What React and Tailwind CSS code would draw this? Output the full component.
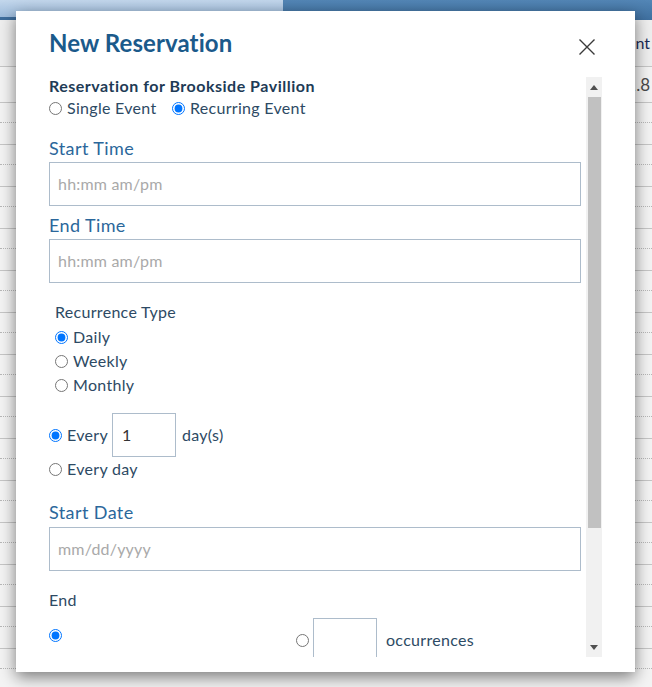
import React from 'react';

function Cells({ children }) {
  return (
    <div className="flex h-full">
      <div className="w-[28px]" />
      <div className="w-[131px] border-l border-[#c9c9c9]" />
      <div className="w-[131px] border-l border-[#c9c9c9]" />
      <div className="w-[131px] border-l border-[#c9c9c9]" />
      <div className="w-[132px] border-l border-[#c9c9c9]" />
      <div className="flex-1 border-l border-[#c9c9c9] flex items-center">
        <div className="w-[96px] shrink-0 text-right whitespace-nowrap">{children}</div>
      </div>
    </div>
  );
}

function Background() {
  const rows = Array.from({ length: 14 });
  return (
    <div className="flex flex-col">
      <div className="h-[20px] flex">
        <div className="w-[283px] bg-gradient-to-b from-[#c3d7ec] to-[#9ebcdc] border-b-[3px] border-[#3e6d9c]" />
        <div className="flex-1 bg-gradient-to-b from-[#5386b6] to-[#3f70a0]" />
      </div>
      <div className="h-[47px] bg-[#efefef] border-b border-[#c6c6c6] text-[16px] text-[#1b2b55]">
        <Cells>Amount</Cells>
      </div>
      <div className="h-[36px] bg-[#f4f4f4] border-b border-[#c6c6c6] text-[17px] text-[#4a4a4a]">
        <Cells>11.8</Cells>
      </div>
      {rows.map((_, i) => (
        <div key={i} className="h-[42px] bg-[#f4f4f4] border-b border-[#c6c6c6] flex flex-col">
          <div className="h-[20px] border-b border-dotted border-[#b8b8b8]" />
          <div className="flex-1" />
        </div>
      ))}
    </div>
  );
}

function Radio({ checked, name }) {
  return (
    <input
      type="radio"
      name={name}
      defaultChecked={checked}
      className="m-0 w-[13px] h-[13px] shrink-0 accent-[#0075ff]"
    />
  );
}

function Field({ placeholder, className = '' }) {
  return (
    <div className={`h-[44px] border border-[#adbccb] flex items-center pl-[8px] text-[16px] tracking-[0.2px] text-[#a9a9a9] ${className}`}>
      {placeholder}
    </div>
  );
}

function Label({ children, className = '' }) {
  return (
    <div className={`h-[22px] flex items-center text-[18px] tracking-[0.4px] text-[#2b679b] ${className}`}>{children}</div>
  );
}

function Option({ name, checked, children, className = '' }) {
  return (
    <label className={`h-[20px] flex items-center gap-[5px] text-[16px] tracking-[0.3px] text-[#2d4a64] ${className}`}>
      <Radio name={name} checked={checked} />
      <span>{children}</span>
    </label>
  );
}

function Scrollbar() {
  return (
    <div className="w-[16px] bg-[#f1f1f1] flex flex-col">
      <div className="h-[20px] flex items-center justify-center">
        <svg width="8" height="5" viewBox="0 0 8 5"><path d="M0 5 L4 0 L8 5 Z" fill="#505050" /></svg>
      </div>
      <div className="h-[431px] ml-[2px] mr-[1px] bg-[#c1c1c1]" />
      <div className="flex-1" />
      <div className="h-[20px] flex items-center justify-center">
        <svg width="8" height="5" viewBox="0 0 8 5"><path d="M0 0 L8 0 L4 5 Z" fill="#505050" /></svg>
      </div>
    </div>
  );
}

export default function App() {
  return (
    <div className="relative w-[652px] h-[687px] overflow-hidden bg-[#ececec] font-['Lato',sans-serif]">
      <Background />

      <div className="absolute left-[16px] top-[11px] w-[619px] h-[661px] bg-white shadow-[0_5px_15px_rgba(0,0,0,0.5)] flex flex-col px-[33px] pb-[15px]">
        <div className="h-[66px] shrink-0 flex items-start justify-between">
          <h2 className="mt-[18px] text-[24px] leading-[28px] font-bold tracking-[0.1px] text-[#1b5a8b]">New Reservation</h2>
          <button className="mt-[28px] mr-[7px]">
            <svg width="16" height="16" viewBox="0 0 16 16">
              <path d="M0.5 0.5 L15.5 15.5 M15.5 0.5 L0.5 15.5" stroke="#3a3a3a" strokeWidth="1.4" />
            </svg>
          </button>
        </div>

        <div className="flex-1 min-h-0 flex gap-[5px]">
          <div className="w-[532px] overflow-hidden">
            <div className="h-[18px] flex items-center text-[16px] tracking-[0.5px] font-bold text-[#1e3b56] whitespace-nowrap">
              Reservation for Brookside Pavillion
            </div>
            <div className="mt-[3px] flex">
              <Option name="kind" className="w-[123px]">Single Event</Option>
              <Option name="kind" checked>Recurring Event</Option>
            </div>

            <Label className="mt-[19px]">Start Time</Label>
            <Field placeholder="hh:mm am/pm" className="mt-[3px]" />
            <Label className="mt-[8px]">End Time</Label>
            <Field placeholder="hh:mm am/pm" className="mt-[3px]" />

            <div className="mt-[19px] pl-[6px]">
              <div className="h-[20px] flex items-center text-[16px] tracking-[0.3px] text-[#2d4a64]">Recurrence Type</div>
              <Option name="rtype" checked className="mt-[5px]">Daily</Option>
              <Option name="rtype" className="mt-[4px]">Weekly</Option>
              <Option name="rtype" className="mt-[4px]">Monthly</Option>
            </div>

            <div className="mt-[18px] h-[44px] flex items-center text-[16px] tracking-[0.3px] text-[#2d4a64]">
              <Radio name="every" checked />
              <span className="ml-[5px]">Every</span>
              <div className="ml-[4px] w-[64px] h-[44px] border border-[#adbccb] flex items-center pl-[9px] text-[#333]">1</div>
              <span className="ml-[6px]">day(s)</span>
            </div>
            <Option name="every" className="mt-[2px]">Every day</Option>

            <Label className="mt-[22px]">Start Date</Label>
            <Field placeholder="mm/dd/yyyy" className="mt-[4px]" />

            <div className="mt-[19px] h-[20px] flex items-center text-[16px] tracking-[0.3px] text-[#2d4a64]">End</div>
            <div className="mt-[8px] flex items-start">
              <div className="w-[247px] pt-[11px] flex">
                <Radio name="end" checked />
              </div>
              <div className="h-[44px] flex items-center text-[16px] tracking-[0.3px] text-[#2d4a64]">
                <Radio name="end" />
                <div className="ml-[4px] w-[64px] h-[44px] border border-[#adbccb]" />
                <span className="ml-[9px]">occurrences</span>
              </div>
            </div>
          </div>
          <Scrollbar />
        </div>
      </div>
    </div>
  );
}
